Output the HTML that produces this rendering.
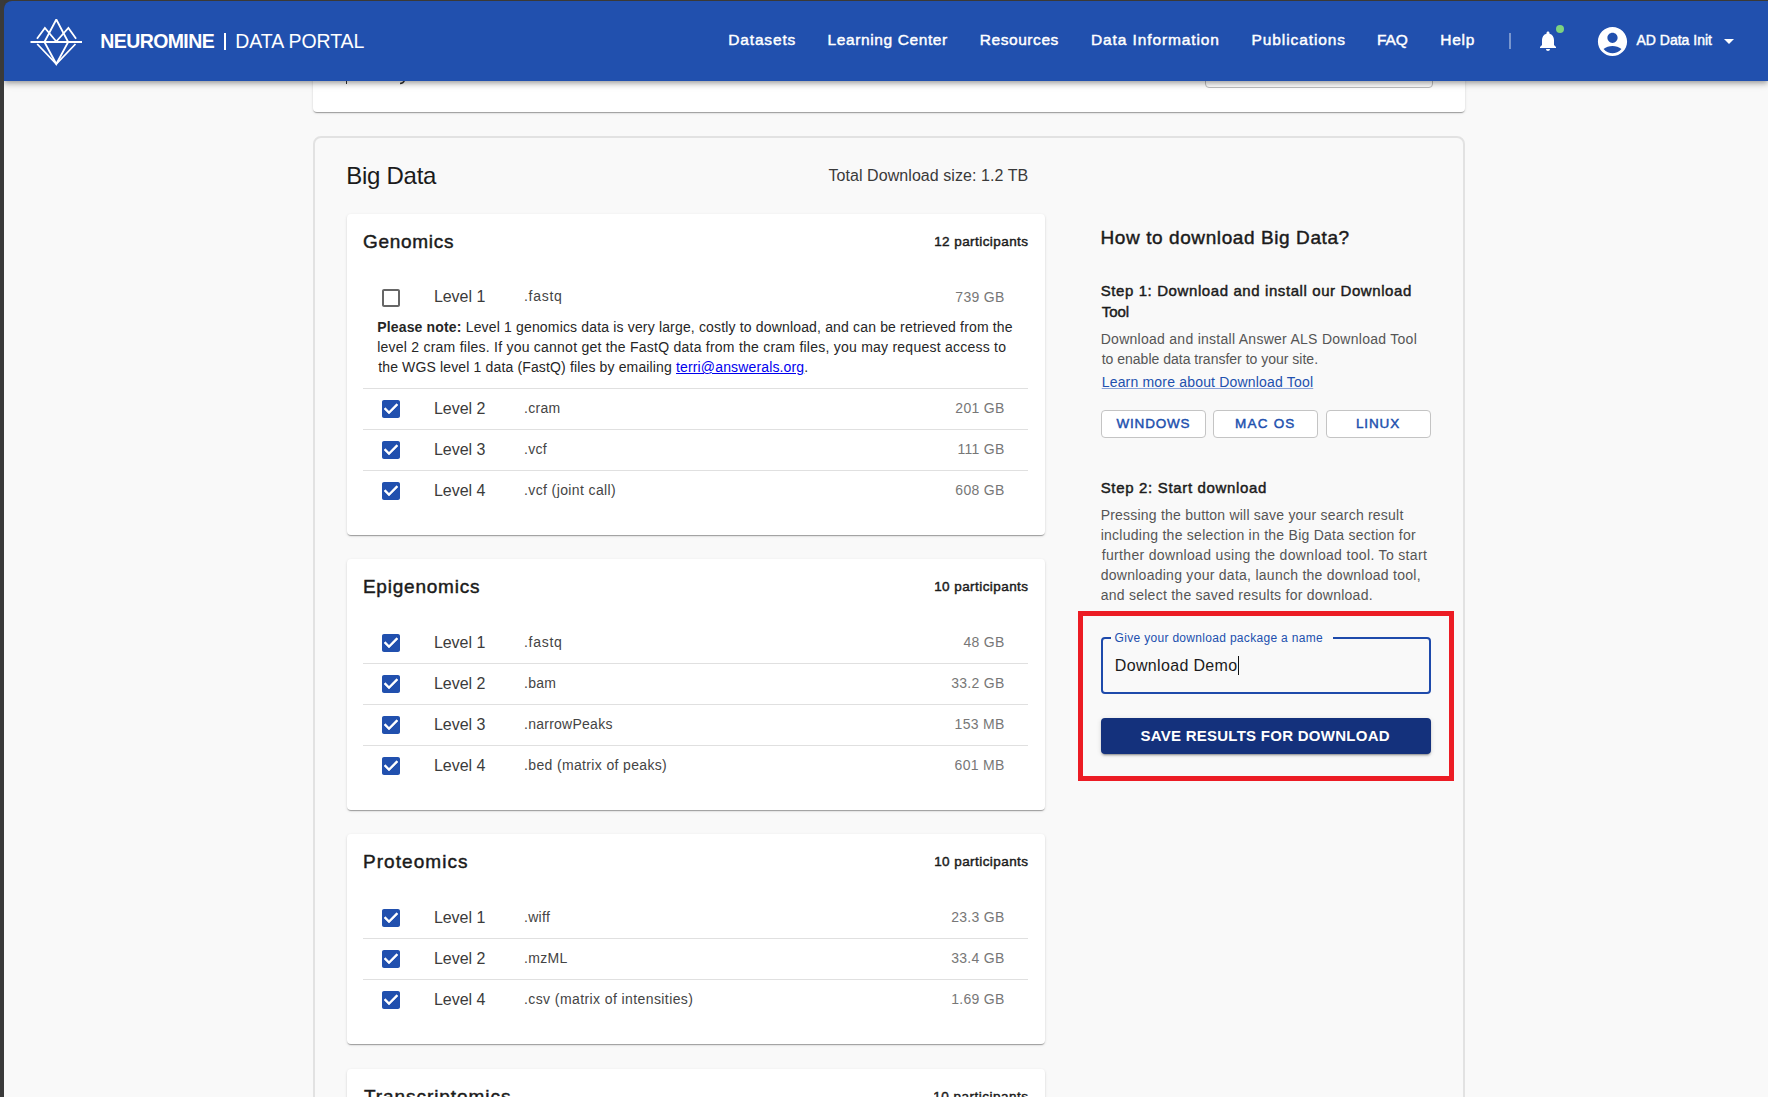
<!DOCTYPE html>
<html><head><meta charset="utf-8">
<style>
*{box-sizing:border-box;margin:0;padding:0}
html,body{width:1768px;height:1097px;overflow:hidden;background:#3b3935;font-family:"Liberation Sans",sans-serif}
#lb{position:absolute;left:0;top:0;width:4px;height:1097px;background:#3a3a3a}
#frame{position:absolute;left:4px;top:1px;width:1764px;height:1096px;border-top-left-radius:8px;overflow:hidden}
#pbg{position:absolute;left:0;top:40px;width:1764px;height:1056px;background:#f9f9f9}
#hdr{position:absolute;left:0;top:0;width:1764px;height:80px;background:#2150ae;box-shadow:0 2px 4px -1px rgba(0,0,0,.2),0 4px 5px 0 rgba(0,0,0,.14),0 1px 10px 0 rgba(0,0,0,.12);z-index:5}
.t{position:absolute;white-space:nowrap;line-height:20px;height:20px}
.card{position:absolute;background:#fff;border-radius:4px;box-shadow:0 2px 1px -1px rgba(0,0,0,.2),0 1px 1px 0 rgba(0,0,0,.14),0 1px 3px 0 rgba(0,0,0,.12)}
.dv{position:absolute;height:1px;background:#e0e0e0}
.cb{position:absolute;width:24px;height:24px}
.ob{position:absolute;background:#fff;border:1px solid #c4c4c4;border-radius:4px}
</style></head><body>
<div id="lb"></div>
<div id="frame">
<div id="pbg"></div>

<div class="card" style="left:309px;top:-29px;width:1152px;height:140px"></div>
<div style="position:absolute;left:1201px;top:27px;width:228px;height:60px;border:1px solid #bdbdbd;border-radius:4px"></div>
<div style="position:absolute;left:341.6px;top:79px;width:1.6px;height:4px;background:#333"></div>
<svg style="position:absolute;left:394px;top:79px" width="8" height="6" viewBox="0 0 8 6"><path d="M6.5 0 Q5.5 3.5 2 3.6" stroke="#333" stroke-width="1.5" fill="none"/></svg>
<div style="position:absolute;left:309px;top:135px;width:1152px;height:1200px;border:2px solid #e2e2e2;border-radius:8px;background:#f9f9f9"></div>
<div class="card" style="left:343px;top:1067.5px;width:698px;height:131.5px"></div>
<div class="card" style="left:343px;top:833px;width:698px;height:210px"></div>
<div class="card" style="left:343px;top:558px;width:698px;height:251px"></div>
<div class="card" style="left:343px;top:212.5px;width:698px;height:321.5px"></div>
<svg class="cb" style="left:375px;top:284.5px" viewBox="0 0 24 24"><path fill="#666" d="M19 5v14H5V5h14m0-2H5c-1.1 0-2 .9-2 2v14c0 1.1.9 2 2 2h14c1.1 0 2-.9 2-2V5c0-1.1-.9-2-2-2z"/></svg>
<div class="dv" style="left:359px;top:387px;width:665px"></div>
<svg class="cb" style="left:375px;top:396px" viewBox="0 0 24 24"><path fill="#2150ae" d="M19 3H5c-1.11 0-2 .9-2 2v14c0 1.1.89 2 2 2h14c1.11 0 2-.9 2-2V5c0-1.1-.89-2-2-2zm-9 14l-5-5 1.41-1.41L10 14.17l7.59-7.59L19 8l-9 9z"/><path fill="#fff" d="M10 17l-5-5 1.41-1.41L10 14.17l7.59-7.59L19 8l-9 9z"/></svg>
<div class="dv" style="left:359px;top:428px;width:665px"></div>
<svg class="cb" style="left:375px;top:437px" viewBox="0 0 24 24"><path fill="#2150ae" d="M19 3H5c-1.11 0-2 .9-2 2v14c0 1.1.89 2 2 2h14c1.11 0 2-.9 2-2V5c0-1.1-.89-2-2-2zm-9 14l-5-5 1.41-1.41L10 14.17l7.59-7.59L19 8l-9 9z"/><path fill="#fff" d="M10 17l-5-5 1.41-1.41L10 14.17l7.59-7.59L19 8l-9 9z"/></svg>
<div class="dv" style="left:359px;top:469px;width:665px"></div>
<svg class="cb" style="left:375px;top:478px" viewBox="0 0 24 24"><path fill="#2150ae" d="M19 3H5c-1.11 0-2 .9-2 2v14c0 1.1.89 2 2 2h14c1.11 0 2-.9 2-2V5c0-1.1-.89-2-2-2zm-9 14l-5-5 1.41-1.41L10 14.17l7.59-7.59L19 8l-9 9z"/><path fill="#fff" d="M10 17l-5-5 1.41-1.41L10 14.17l7.59-7.59L19 8l-9 9z"/></svg>
<svg class="cb" style="left:375px;top:630px" viewBox="0 0 24 24"><path fill="#2150ae" d="M19 3H5c-1.11 0-2 .9-2 2v14c0 1.1.89 2 2 2h14c1.11 0 2-.9 2-2V5c0-1.1-.89-2-2-2zm-9 14l-5-5 1.41-1.41L10 14.17l7.59-7.59L19 8l-9 9z"/><path fill="#fff" d="M10 17l-5-5 1.41-1.41L10 14.17l7.59-7.59L19 8l-9 9z"/></svg>
<div class="dv" style="left:359px;top:662px;width:665px"></div>
<svg class="cb" style="left:375px;top:671px" viewBox="0 0 24 24"><path fill="#2150ae" d="M19 3H5c-1.11 0-2 .9-2 2v14c0 1.1.89 2 2 2h14c1.11 0 2-.9 2-2V5c0-1.1-.89-2-2-2zm-9 14l-5-5 1.41-1.41L10 14.17l7.59-7.59L19 8l-9 9z"/><path fill="#fff" d="M10 17l-5-5 1.41-1.41L10 14.17l7.59-7.59L19 8l-9 9z"/></svg>
<div class="dv" style="left:359px;top:703px;width:665px"></div>
<svg class="cb" style="left:375px;top:712px" viewBox="0 0 24 24"><path fill="#2150ae" d="M19 3H5c-1.11 0-2 .9-2 2v14c0 1.1.89 2 2 2h14c1.11 0 2-.9 2-2V5c0-1.1-.89-2-2-2zm-9 14l-5-5 1.41-1.41L10 14.17l7.59-7.59L19 8l-9 9z"/><path fill="#fff" d="M10 17l-5-5 1.41-1.41L10 14.17l7.59-7.59L19 8l-9 9z"/></svg>
<div class="dv" style="left:359px;top:744px;width:665px"></div>
<svg class="cb" style="left:375px;top:753px" viewBox="0 0 24 24"><path fill="#2150ae" d="M19 3H5c-1.11 0-2 .9-2 2v14c0 1.1.89 2 2 2h14c1.11 0 2-.9 2-2V5c0-1.1-.89-2-2-2zm-9 14l-5-5 1.41-1.41L10 14.17l7.59-7.59L19 8l-9 9z"/><path fill="#fff" d="M10 17l-5-5 1.41-1.41L10 14.17l7.59-7.59L19 8l-9 9z"/></svg>
<svg class="cb" style="left:375px;top:905px" viewBox="0 0 24 24"><path fill="#2150ae" d="M19 3H5c-1.11 0-2 .9-2 2v14c0 1.1.89 2 2 2h14c1.11 0 2-.9 2-2V5c0-1.1-.89-2-2-2zm-9 14l-5-5 1.41-1.41L10 14.17l7.59-7.59L19 8l-9 9z"/><path fill="#fff" d="M10 17l-5-5 1.41-1.41L10 14.17l7.59-7.59L19 8l-9 9z"/></svg>
<div class="dv" style="left:359px;top:937px;width:665px"></div>
<svg class="cb" style="left:375px;top:946px" viewBox="0 0 24 24"><path fill="#2150ae" d="M19 3H5c-1.11 0-2 .9-2 2v14c0 1.1.89 2 2 2h14c1.11 0 2-.9 2-2V5c0-1.1-.89-2-2-2zm-9 14l-5-5 1.41-1.41L10 14.17l7.59-7.59L19 8l-9 9z"/><path fill="#fff" d="M10 17l-5-5 1.41-1.41L10 14.17l7.59-7.59L19 8l-9 9z"/></svg>
<div class="dv" style="left:359px;top:978px;width:665px"></div>
<svg class="cb" style="left:375px;top:987px" viewBox="0 0 24 24"><path fill="#2150ae" d="M19 3H5c-1.11 0-2 .9-2 2v14c0 1.1.89 2 2 2h14c1.11 0 2-.9 2-2V5c0-1.1-.89-2-2-2zm-9 14l-5-5 1.41-1.41L10 14.17l7.59-7.59L19 8l-9 9z"/><path fill="#fff" d="M10 17l-5-5 1.41-1.41L10 14.17l7.59-7.59L19 8l-9 9z"/></svg>
<div class="ob" style="left:1097px;top:409px;width:105px;height:27.5px"></div>
<div class="ob" style="left:1209px;top:409px;width:105px;height:27.5px"></div>
<div class="ob" style="left:1322px;top:409px;width:105px;height:27.5px"></div>
<div style="position:absolute;left:1074px;top:610px;width:376px;height:170px;border:5px solid #ec1c24"></div>
<div style="position:absolute;left:1097px;top:636px;width:330px;height:57px;border:2px solid #1e4aab;border-radius:4px"></div>
<div style="position:absolute;left:1107px;top:635px;width:222px;height:4px;background:#f9f9f9"></div>
<div style="position:absolute;left:1097px;top:717px;width:330px;height:36px;background:#14317c;border-radius:4px;box-shadow:0 3px 1px -2px rgba(0,0,0,.2),0 2px 2px 0 rgba(0,0,0,.14),0 1px 5px 0 rgba(0,0,0,.12)"></div>
<div class="t" id="h_neuro" style="top:30px;font-size:19.5px;color:#fff;font-weight:700;letter-spacing:-0.600px;left:96.3px;z-index:6;">NEUROMINE</div>
<div class="t" id="h_portal" style="top:30px;font-size:19.5px;color:#fff;letter-spacing:-0.060px;left:231.3px;z-index:6;">DATA PORTAL</div>
<div class="t" id="nav0" style="top:29px;font-size:15.5px;color:#fff;-webkit-text-stroke:0.45px #fff;letter-spacing:0.857px;left:724.2px;z-index:6;">Datasets</div>
<div class="t" id="nav1" style="top:29px;font-size:15.5px;color:#fff;-webkit-text-stroke:0.45px #fff;letter-spacing:0.614px;left:823.5px;z-index:6;">Learning Center</div>
<div class="t" id="nav2" style="top:29px;font-size:15.5px;color:#fff;-webkit-text-stroke:0.45px #fff;letter-spacing:0.575px;left:975.7px;z-index:6;">Resources</div>
<div class="t" id="nav3" style="top:29px;font-size:15.5px;color:#fff;-webkit-text-stroke:0.45px #fff;letter-spacing:0.893px;left:1087px;z-index:6;">Data Information</div>
<div class="t" id="nav4" style="top:29px;font-size:15.5px;color:#fff;-webkit-text-stroke:0.45px #fff;letter-spacing:0.909px;left:1247.5px;z-index:6;">Publications</div>
<div class="t" id="nav5" style="top:29px;font-size:15.5px;color:#fff;-webkit-text-stroke:0.45px #fff;letter-spacing:-0.100px;left:1373px;z-index:6;">FAQ</div>
<div class="t" id="nav6" style="top:29px;font-size:15.5px;color:#fff;-webkit-text-stroke:0.45px #fff;letter-spacing:0.733px;left:1436.3px;z-index:6;">Help</div>
<div class="t" id="h_user" style="top:29px;font-size:14px;color:#fff;-webkit-text-stroke:0.45px #fff;letter-spacing:0.000px;left:1632.5px;z-index:6;">AD Data Init</div>
<div class="t" id="bd_title" style="top:165px;font-size:24px;color:#1b1b1b;letter-spacing:-0.257px;left:342.2px;">Big Data</div>
<div class="t" id="bd_total" style="top:165px;font-size:16px;color:#3a3a3a;letter-spacing:0.062px;left:824.5px;">Total Download size: 1.2 TB</div>
<div class="t" id="c0_title" style="top:231px;font-size:19px;color:#1b1b1b;-webkit-text-stroke:0.45px #1b1b1b;letter-spacing:0.714px;left:358.9px;">Genomics</div>
<div class="t" id="c0_part" style="top:231px;font-size:13.5px;color:#1b1b1b;-webkit-text-stroke:0.45px #1b1b1b;letter-spacing:0.429px;right:739.57px;">12 participants</div>
<div class="t" id="c0_r0_lv" style="top:286px;font-size:16px;color:#3b3b3b;letter-spacing:-0.033px;left:429.9px;">Level 1</div>
<div class="t" id="c0_r0_ext" style="top:285px;font-size:14px;color:#444;letter-spacing:0.720px;left:520px;">.fastq</div>
<div class="t" id="c0_r0_sz" style="top:286px;font-size:14px;color:#777;letter-spacing:0.300px;right:763.4px;">739 GB</div>
<div class="t" id="note1" style="top:316px;font-size:14px;color:#262626;letter-spacing:0.163px;left:373.2px;"><b>Please note:</b> Level 1 genomics data is very large, costly to download, and can be retrieved from the</div>
<div class="t" id="note2" style="top:336px;font-size:14px;color:#262626;letter-spacing:0.239px;left:373.2px;">level 2 cram files. If you cannot get the FastQ data from the cram files, you may request access to</div>
<div class="t" id="note3" style="top:356px;font-size:14px;color:#262626;letter-spacing:0.145px;left:374.2px;">the WGS level 1 data (FastQ) files by emailing <u style="color:#0000ee">terri@answerals.org</u>.</div>
<div class="t" id="c0_r1_lv" style="top:398px;font-size:16px;color:#3b3b3b;left:429.9px;">Level 2</div>
<div class="t" id="c0_r1_ext" style="top:397px;font-size:14px;color:#444;letter-spacing:0.300px;left:520px;">.cram</div>
<div class="t" id="c0_r1_sz" style="top:397px;font-size:14px;color:#777;letter-spacing:0.300px;right:763.4px;">201 GB</div>
<div class="t" id="c0_r2_lv" style="top:439px;font-size:16px;color:#3b3b3b;left:429.9px;">Level 3</div>
<div class="t" id="c0_r2_ext" style="top:438px;font-size:14px;color:#444;letter-spacing:0.300px;left:520px;">.vcf</div>
<div class="t" id="c0_r2_sz" style="top:438px;font-size:14px;color:#777;letter-spacing:0.300px;right:763.4px;">111 GB</div>
<div class="t" id="c0_r3_lv" style="top:480px;font-size:16px;color:#3b3b3b;letter-spacing:0.000px;left:429.9px;">Level 4</div>
<div class="t" id="c0_r3_ext" style="top:479px;font-size:14px;color:#444;letter-spacing:0.388px;left:520px;">.vcf (joint call)</div>
<div class="t" id="c0_r3_sz" style="top:479px;font-size:14px;color:#777;letter-spacing:0.300px;right:763.4px;">608 GB</div>
<div class="t" id="c1_title" style="top:576px;font-size:19px;color:#1b1b1b;-webkit-text-stroke:0.45px #1b1b1b;letter-spacing:0.780px;left:358.9px;">Epigenomics</div>
<div class="t" id="c1_part" style="top:576px;font-size:13.5px;color:#1b1b1b;-webkit-text-stroke:0.45px #1b1b1b;letter-spacing:0.429px;right:739.57px;">10 participants</div>
<div class="t" id="c1_r0_lv" style="top:632px;font-size:16px;color:#3b3b3b;letter-spacing:-0.033px;left:429.9px;">Level 1</div>
<div class="t" id="c1_r0_ext" style="top:631px;font-size:14px;color:#444;letter-spacing:0.720px;left:520px;">.fastq</div>
<div class="t" id="c1_r0_sz" style="top:631px;font-size:14px;color:#777;letter-spacing:0.300px;right:763.4px;">48 GB</div>
<div class="t" id="c1_r1_lv" style="top:673px;font-size:16px;color:#3b3b3b;left:429.9px;">Level 2</div>
<div class="t" id="c1_r1_ext" style="top:672px;font-size:14px;color:#444;letter-spacing:0.300px;left:520px;">.bam</div>
<div class="t" id="c1_r1_sz" style="top:672px;font-size:14px;color:#777;letter-spacing:0.300px;right:763.4px;">33.2 GB</div>
<div class="t" id="c1_r2_lv" style="top:714px;font-size:16px;color:#3b3b3b;left:429.9px;">Level 3</div>
<div class="t" id="c1_r2_ext" style="top:713px;font-size:14px;color:#444;letter-spacing:0.255px;left:520px;">.narrowPeaks</div>
<div class="t" id="c1_r2_sz" style="top:713px;font-size:14px;color:#777;letter-spacing:0.300px;right:763.4px;">153 MB</div>
<div class="t" id="c1_r3_lv" style="top:755px;font-size:16px;color:#3b3b3b;letter-spacing:0.000px;left:429.9px;">Level 4</div>
<div class="t" id="c1_r3_ext" style="top:754px;font-size:14px;color:#444;letter-spacing:0.352px;left:520px;">.bed (matrix of peaks)</div>
<div class="t" id="c1_r3_sz" style="top:754px;font-size:14px;color:#777;letter-spacing:0.300px;right:763.4px;">601 MB</div>
<div class="t" id="c2_title" style="top:851px;font-size:19px;color:#1b1b1b;-webkit-text-stroke:0.45px #1b1b1b;letter-spacing:1.067px;left:358.9px;">Proteomics</div>
<div class="t" id="c2_part" style="top:851px;font-size:13.5px;color:#1b1b1b;-webkit-text-stroke:0.45px #1b1b1b;letter-spacing:0.429px;right:739.57px;">10 participants</div>
<div class="t" id="c2_r0_lv" style="top:907px;font-size:16px;color:#3b3b3b;letter-spacing:-0.033px;left:429.9px;">Level 1</div>
<div class="t" id="c2_r0_ext" style="top:906px;font-size:14px;color:#444;letter-spacing:0.300px;left:520px;">.wiff</div>
<div class="t" id="c2_r0_sz" style="top:906px;font-size:14px;color:#777;letter-spacing:0.300px;right:763.4px;">23.3 GB</div>
<div class="t" id="c2_r1_lv" style="top:948px;font-size:16px;color:#3b3b3b;left:429.9px;">Level 2</div>
<div class="t" id="c2_r1_ext" style="top:947px;font-size:14px;color:#444;letter-spacing:0.300px;left:520px;">.mzML</div>
<div class="t" id="c2_r1_sz" style="top:947px;font-size:14px;color:#777;letter-spacing:0.300px;right:763.4px;">33.4 GB</div>
<div class="t" id="c2_r2_lv" style="top:989px;font-size:16px;color:#3b3b3b;letter-spacing:0.000px;left:429.9px;">Level 4</div>
<div class="t" id="c2_r2_ext" style="top:988px;font-size:14px;color:#444;letter-spacing:0.407px;left:520px;">.csv (matrix of intensities)</div>
<div class="t" id="c2_r2_sz" style="top:988px;font-size:14px;color:#777;letter-spacing:0.300px;right:763.4px;">1.69 GB</div>
<div class="t" id="c3_title" style="top:1086px;font-size:19px;color:#1b1b1b;-webkit-text-stroke:0.45px #1b1b1b;letter-spacing:0.943px;left:359.9px;">Transcriptomics</div>
<div class="t" id="c3_part" style="top:1086px;font-size:13.5px;color:#1b1b1b;-webkit-text-stroke:0.45px #1b1b1b;letter-spacing:0.500px;right:739.5px;">10 participants</div>
<div class="t" id="howto" style="top:227px;font-size:19px;color:#1b1b1b;-webkit-text-stroke:0.45px #1b1b1b;letter-spacing:0.592px;left:1096.5px;">How to download Big Data?</div>
<div class="t" id="step1a" style="top:280px;font-size:15px;color:#1b1b1b;-webkit-text-stroke:0.45px #1b1b1b;letter-spacing:0.595px;left:1096.7px;">Step 1: Download and install our Download</div>
<div class="t" id="step1b" style="top:301px;font-size:15px;color:#1b1b1b;-webkit-text-stroke:0.45px #1b1b1b;left:1097.7px;">Tool</div>
<div class="t" id="desc1" style="top:328px;font-size:14px;color:#555;letter-spacing:0.273px;left:1096.7px;">Download and install Answer ALS Download Tool</div>
<div class="t" id="desc2" style="top:348px;font-size:14px;color:#555;left:1097.7px;">to enable data transfer to your site.</div>
<div class="t" id="learn" style="top:371px;font-size:14px;color:#2150ae;letter-spacing:0.186px;left:1097.7px;text-decoration:underline;text-decoration-color:#8aa3d8;">Learn more about Download Tool</div>
<div class="t" id="btn_win" style="top:413px;font-size:13.5px;color:#2150ae;-webkit-text-stroke:0.45px #2150ae;letter-spacing:0.800px;left:1112.5px;">WINDOWS</div>
<div class="t" id="btn_mac" style="top:413px;font-size:13.5px;color:#2150ae;-webkit-text-stroke:0.45px #2150ae;letter-spacing:1.200px;left:1231.1px;">MAC OS</div>
<div class="t" id="btn_lin" style="top:413px;font-size:13.5px;color:#2150ae;-webkit-text-stroke:0.45px #2150ae;letter-spacing:0.850px;left:1352px;">LINUX</div>
<div class="t" id="step2" style="top:477px;font-size:15px;color:#1b1b1b;-webkit-text-stroke:0.45px #1b1b1b;letter-spacing:0.667px;left:1096.7px;">Step 2: Start download</div>
<div class="t" id="p2_0" style="top:504px;font-size:14px;color:#555;letter-spacing:0.213px;left:1096.7px;">Pressing the button will save your search result</div>
<div class="t" id="p2_1" style="top:524px;font-size:14px;color:#555;letter-spacing:0.260px;left:1096.7px;">including the selection in the Big Data section for</div>
<div class="t" id="p2_2" style="top:544px;font-size:14px;color:#555;letter-spacing:0.335px;left:1097.7px;">further download using the download tool. To start</div>
<div class="t" id="p2_3" style="top:564px;font-size:14px;color:#555;letter-spacing:0.264px;left:1096.7px;">downloading your data, launch the download tool,</div>
<div class="t" id="p2_4" style="top:584px;font-size:14px;color:#555;letter-spacing:0.254px;left:1096.7px;">and select the saved results for download.</div>
<div class="t" id="label" style="top:627px;font-size:12px;color:#2150ae;letter-spacing:0.310px;left:1110.6px;">Give your download package a name</div>
<div class="t" id="value" style="top:655px;font-size:16px;color:#1b1b1b;letter-spacing:0.333px;left:1110.8px;">Download Demo<span style="display:inline-block;width:1px;height:19px;background:#111;vertical-align:-4px;margin-left:1px"></span></div>
<div class="t" id="savebtn" style="top:725px;font-size:15px;color:#fff;font-weight:700;letter-spacing:0.267px;left:1136.4px;">SAVE RESULTS FOR DOWNLOAD</div>
<div id="hdr">
<svg style="position:absolute;left:0;top:0" width="100" height="80" viewBox="4 1 100 80"><g fill="none" stroke="#fff" stroke-width="1.8"><line x1="30.5" y1="42" x2="82" y2="42"/><polyline points="56.3,19.5 44.4,42 56.3,64 68.2,42 56.3,19.5"/><polyline points="37,38.7 44.9,28 56.3,41.5 68.4,28 76.1,38.7"/><polyline points="37.2,44 56.3,64 75.5,44"/></g></svg>
<div style="position:absolute;left:220px;top:32px;width:2px;height:17px;background:#fff"></div>
<div style="position:absolute;left:1505px;top:32px;width:1.5px;height:16px;background:rgba(255,255,255,.4)"></div>
<svg style="position:absolute;left:1532px;top:28px" width="24" height="24" viewBox="0 0 24 24"><path fill="#fff" d="M12 22c1.1 0 2-.9 2-2h-4c0 1.1.89 2 2 2zm6-6v-5c0-3.07-1.64-5.64-4.5-6.32V4c0-.83-.67-1.5-1.5-1.5s-1.5.67-1.5 1.5v.68C7.63 5.36 6 7.92 6 11v5l-2 2v1h16v-1l-2-2z"/></svg>
<div style="position:absolute;left:1552px;top:24px;width:8px;height:8px;border-radius:50%;background:#7ed37f"></div>
<svg style="position:absolute;left:1591px;top:22.5px" width="35" height="35" viewBox="0 0 24 24"><path fill="#fff" d="M12 2C6.48 2 2 6.48 2 12s4.48 10 10 10 10-4.48 10-10S17.52 2 12 2zm0 4c1.93 0 3.5 1.57 3.5 3.5S13.93 13 12 13s-3.5-1.57-3.5-3.5S10.070 6 12 6zm0 14c-2.03 0-4.43-.82-6.14-2.88C7.55 15.8 9.68 15 12 15s4.45.8 6.14 2.12C16.43 19.18 14.03 20 12 20z"/></svg>
<svg style="position:absolute;left:1713px;top:28px" width="24" height="24" viewBox="0 0 24 24"><path fill="#fff" d="M7 10l5 5 5-5z"/></svg>

</div>
</div></body></html>
